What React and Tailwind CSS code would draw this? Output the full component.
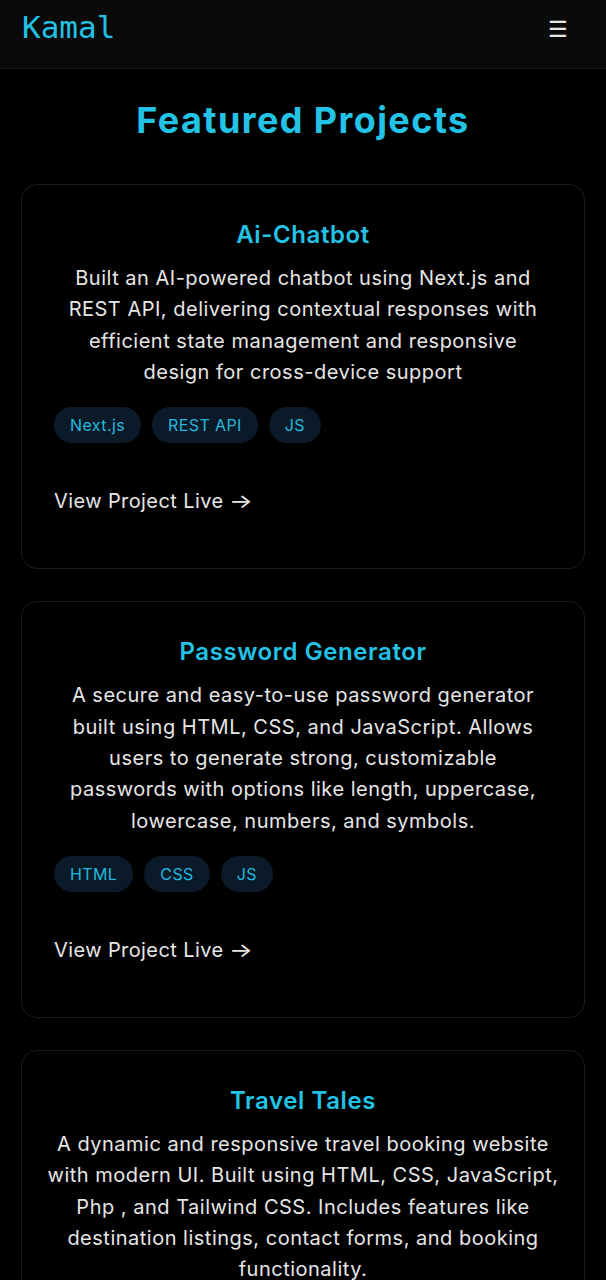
import React from 'react';

const projects = [
  {
    title: 'Ai-Chatbot',
    lines: [
      'Built an AI-powered chatbot using Next.js and',
      'REST API, delivering contextual responses with',
      'efficient state management and responsive',
      'design for cross-device support',
    ],
    tags: ['Next.js', 'REST API', 'JS'],
  },
  {
    title: 'Password Generator',
    lines: [
      'A secure and easy-to-use password generator',
      'built using HTML, CSS, and JavaScript. Allows',
      'users to generate strong, customizable',
      'passwords with options like length, uppercase,',
      'lowercase, numbers, and symbols.',
    ],
    tags: ['HTML', 'CSS', 'JS'],
  },
  {
    title: 'Travel Tales',
    lines: [
      'A dynamic and responsive travel booking website',
      'with modern UI. Built using HTML, CSS, JavaScript,',
      'Php , and Tailwind CSS. Includes features like',
      'destination listings, contact forms, and booking',
      'functionality.',
    ],
    tags: ['HTML', 'CSS', 'JS', 'Php', 'Tailwind'],
  },
];

const ProjectCard = ({ project }) => (
  <div className="rounded-2xl border border-[#1c1c1c] bg-black px-8 pt-[34px] pb-[53px]">
    <h3 className="text-center text-[24px] leading-8 font-semibold tracking-[0.6px] text-[#22c3e6]">{project.title}</h3>
    <p className="-mx-3 mt-[12px] text-center text-[20px] leading-[31.33px] tracking-[0.5px] text-[#e6e6e6]">
      {project.lines.map((l, i) => (
        <span key={i} className="block whitespace-nowrap">{l}</span>
      ))}
    </p>
    <div className="mt-[19px] flex flex-wrap gap-[11px]">
      {project.tags.map((t) => (
        <span key={t} className="h-9 px-[16px] rounded-full bg-[#0a1a29] text-[#22b8dc] text-[16px] leading-9 tracking-[0.4px]">
          {t}
        </span>
      ))}
    </div>
    <a className="mt-[44px] block text-[20px] leading-7 tracking-[0.4px] text-[#e6e6e6]">
      View Project Live <span className="inline-block scale-x-125 origin-left">→</span>
    </a>
  </div>
);

export default function App() {
  return (
    <div className="min-h-screen bg-black" style={{ fontFamily: 'Inter, "Noto Sans", sans-serif' }}>
      <header className="h-[69px] bg-[#0a0a0a] border-b border-[#161616] flex items-start justify-between pl-[22px] pr-[38px] pt-[9px]">
        <span className="text-[31px] leading-9 text-[#22c3e6]" style={{ fontFamily: '"DejaVu Sans Mono", monospace' }}>Kamal</span>
        <span className="text-[22px] leading-9 mt-[2px] text-[#e6e6e6]">☰</span>
      </header>
      <main className="px-[21px]">
        <h2 className="pt-[29px] text-center text-[36px] leading-[44px] font-bold tracking-[1.4px] text-[#22c3e6]">Featured Projects</h2>
        <div className="mt-[42px] flex flex-col gap-8">
          {projects.map((p) => (
            <ProjectCard key={p.title} project={p} />
          ))}
        </div>
      </main>
    </div>
  );
}
